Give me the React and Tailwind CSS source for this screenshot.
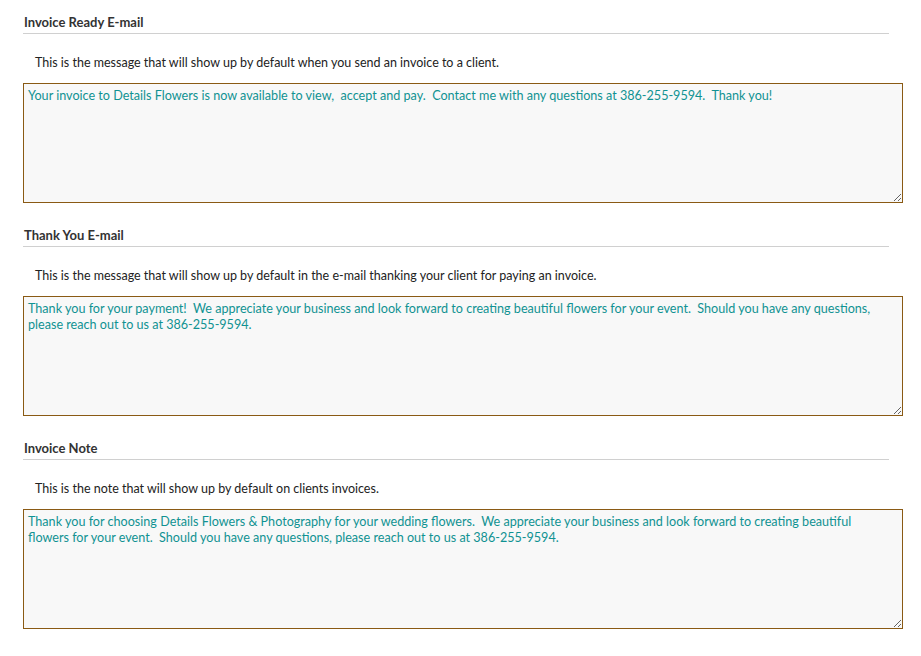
import React from 'react';

const sections = [
  {
    title: 'Invoice Ready E-mail',
    help: 'This is the message that will show up by default when you send an invoice to a client.',
    value:
      'Your invoice to Details Flowers is now available to view,  accept and pay.  Contact me with any questions at 386-255-9594.  Thank you!',
  },
  {
    title: 'Thank You E-mail',
    help: 'This is the message that will show up by default in the e-mail thanking your client for paying an invoice.',
    value:
      'Thank you for your payment!  We appreciate your business and look forward to creating beautiful flowers for your event.  Should you have any questions, please reach out to us at 386-255-9594.',
  },
  {
    title: 'Invoice Note',
    help: 'This is the note that will show up by default on clients invoices.',
    value:
      'Thank you for choosing Details Flowers & Photography for your wedding flowers.  We appreciate your business and look forward to creating beautiful flowers for your event.  Should you have any questions, please reach out to us at 386-255-9594.',
  },
];

export default function App() {
  return (
    <div className="min-h-screen bg-white pt-[14px] pl-[23px] pr-[18px] font-['Lato','Open_Sans',sans-serif]">
      {sections.map((s, i) => (
        <div key={s.title} className={i > 0 ? 'mt-[24px]' : ''}>
          {/* heading with rule */}
          <div className="mr-[14px] border-b border-[#d0d0d0] pb-[3px] pl-[1px] text-[13px] leading-[16px] font-bold text-[#333]">
            {s.title}
          </div>
          <p className="mt-[20px] pl-[12px] text-[12.5px] leading-[18px] text-[#222]">{s.help}</p>
          <textarea
            defaultValue={s.value}
            className="mt-[11px] block h-[120px] w-full border border-[#8a5a14] bg-[#f8f8f8] pt-[4px] pb-[4px] pl-[4px] pr-[14px] text-[12.6px] leading-[16px] text-[#109292] outline-none"
          />
        </div>
      ))}
    </div>
  );
}
